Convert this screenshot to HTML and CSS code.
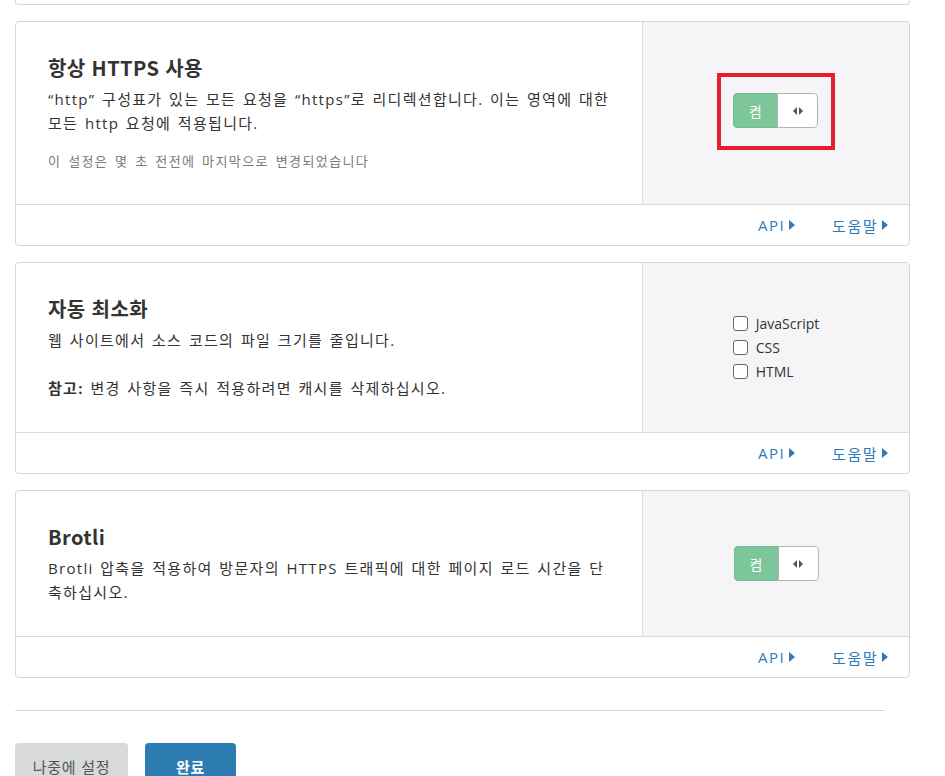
FILE: index.html
```html
<!DOCTYPE html>
<html lang="ko">
<head>
<meta charset="utf-8">
<link rel="stylesheet" href="styles.css">
</head>
<body>
<div class="page">
  <div class="stub"></div>

  <section class="card">
    <div class="card-body">
      <div class="card-main">
        <h2 class="title">항상 HTTPS 사용</h2>
        <p class="desc">“http” 구성표가 있는 모든 요청을 “https”로 리디렉션합니다. 이는 영역에 대한 모든 http 요청에 적용됩니다.</p>
        <p class="meta">이 설정은 몇 초 전전에 마지막으로 변경되었습니다</p>
      </div>
      <div class="card-side">
        <div class="highlight">
          <div class="toggle"><span class="toggle-on">켬</span><span class="toggle-knob"><span class="tri-l"></span><span class="tri-r"></span></span></div>
        </div>
      </div>
    </div>
    <div class="card-footer">
      <a class="link">API<span class="caret"></span></a>
      <a class="link">도움말<span class="caret"></span></a>
    </div>
  </section>

  <section class="card">
    <div class="card-body">
      <div class="card-main">
        <h2 class="title">자동 최소화</h2>
        <p class="desc">웹 사이트에서 소스 코드의 파일 크기를 줄입니다.<br><br><b>참고:</b> 변경 사항을 즉시 적용하려면 캐시를 삭제하십시오.</p>
      </div>
      <div class="card-side">
        <div class="checks">
          <label class="check"><input type="checkbox">JavaScript</label>
          <label class="check"><input type="checkbox">CSS</label>
          <label class="check"><input type="checkbox">HTML</label>
        </div>
      </div>
    </div>
    <div class="card-footer">
      <a class="link">API<span class="caret"></span></a>
      <a class="link">도움말<span class="caret"></span></a>
    </div>
  </section>

  <section class="card">
    <div class="card-body">
      <div class="card-main">
        <h2 class="title">Brotli</h2>
        <p class="desc">Brotli 압축을 적용하여 방문자의 HTTPS 트래픽에 대한 페이지 로드 시간을 단축하십시오.</p>
      </div>
      <div class="card-side">
        <div class="toggle"><span class="toggle-on">켬</span><span class="toggle-knob"><span class="tri-l"></span><span class="tri-r"></span></span></div>
      </div>
    </div>
    <div class="card-footer">
      <a class="link">API<span class="caret"></span></a>
      <a class="link">도움말<span class="caret"></span></a>
    </div>
  </section>

  <hr class="sep">

  <div class="actions">
    <button class="btn btn-gray">나중에 설정</button>
    <button class="btn btn-blue">완료</button>
  </div>
</div>
</body>
</html>
```

FILE: styles.css
```css
* { box-sizing: border-box; }
html, body { margin: 0; padding: 0; background: #fff; }
body {
  font-family: "Open Sans", "Noto Sans CJK KR", sans-serif;
  color: #333;
  overflow: hidden;
  height: 776px;
}
.page {
  padding: 0 35px 0 15px;
}
.stub {
  height: 5px;
  border: 1px solid #d6d6d6;
  border-top: none;
  border-radius: 0 0 4px 4px;
  margin-bottom: 16px;
}
.card {
  border: 1px solid #d6d6d6;
  border-radius: 4px;
  margin-bottom: 16px;
  overflow: hidden;
}
.card-body {
  display: grid;
  grid-template-columns: 626px 1fr;
}
.card-main {
  padding: 32px 32px 32px 32px;
}
.title {
  margin: 0;
  font-family: "Noto Sans CJK KR", sans-serif;
  font-size: 20px;
  line-height: 27px;
  font-weight: 700;
  color: #333;
  letter-spacing: 0.4px;
}
.desc {
  margin: 6px 0 0;
  font-size: 15px;
  line-height: 24px;
  color: #333;
  letter-spacing: 1.3px;
  word-spacing: 1.5px;
}
.desc b { font-weight: 700; }
.meta {
  margin: 16px 0 0;
  font-size: 13px;
  line-height: 21px;
  color: #7a7a7a;
  letter-spacing: 1.4px;
  word-spacing: 2px;
}
.card-side {
  background: #f5f5f7;
  border-left: 1px solid #dcdcdc;
  display: flex;
  align-items: center;
  justify-content: center;
}
.card-footer {
  border-top: 1px solid #dcdcdc;
  height: 41px;
  display: flex;
  align-items: center;
  justify-content: flex-end;
  gap: 37px;
  padding-right: 21px;
}
.link {
  color: #2f7ab8;
  font-size: 15px;
  letter-spacing: 1.5px;
  display: inline-flex;
  align-items: center;
  cursor: pointer;
}
.caret {
  display: inline-block;
  width: 0;
  height: 0;
  margin-left: 4px;
  border-left: 6px solid #2f7ab8;
  border-top: 5px solid transparent;
  border-bottom: 5px solid transparent;
}
.highlight {
  position: relative;
  padding: 16px 13px 18px 12px;
  margin-bottom: 3px;
  border: 4px solid #e3202b;
}
.toggle {
  display: flex;
  width: 85px;
  height: 35px;
  border-radius: 4px;
  overflow: hidden;
}
.toggle-on {
  width: 44px;
  background: #7cc69a;
  border: 1px solid #72bd90;
  border-right: none;
  border-radius: 4px 0 0 4px;
  color: #fff;
  font-size: 14px;
  display: flex;
  align-items: center;
  justify-content: center;
}
.toggle-knob {
  flex: 1;
  background: #fff;
  border: 1px solid #b3b3b3;
  border-radius: 0 4px 4px 0;
  display: flex;
  align-items: center;
  justify-content: center;
  gap: 2px;
}
.tri-l, .tri-r {
  width: 0;
  height: 0;
  border-top: 4px solid transparent;
  border-bottom: 4px solid transparent;
}
.tri-l { border-right: 4px solid #555; }
.tri-r { border-left: 4px solid #555; }
.checks {
  display: flex;
  flex-direction: column;
}
.check {
  display: flex;
  align-items: center;
  height: 24px;
  font-size: 14px;
  color: #333;
}
.check input {
  appearance: none;
  -webkit-appearance: none;
  width: 15px;
  height: 15px;
  margin: 0 8px 0 0;
  border: 1px solid #666;
  border-radius: 3px;
  background: #fff;
}
.sep {
  border: none;
  border-top: 1px solid #d9d9d9;
  margin: 32px 25px 32px 0;
  height: 0;
}
.actions {
  display: flex;
  gap: 17px;
}
.btn {
  font-family: "Open Sans", "Noto Sans CJK KR", sans-serif;
  font-size: 15px;
  letter-spacing: 0.8px;
  height: 46px;
  border: none;
  border-radius: 4px;
  padding: 0;
}
.btn-gray {
  width: 113px;
  background: #d8d9db;
  color: #555;
}
.btn-blue {
  width: 91px;
  background: #2c7bb1;
  color: #fff;
  font-weight: 700;
}
```
